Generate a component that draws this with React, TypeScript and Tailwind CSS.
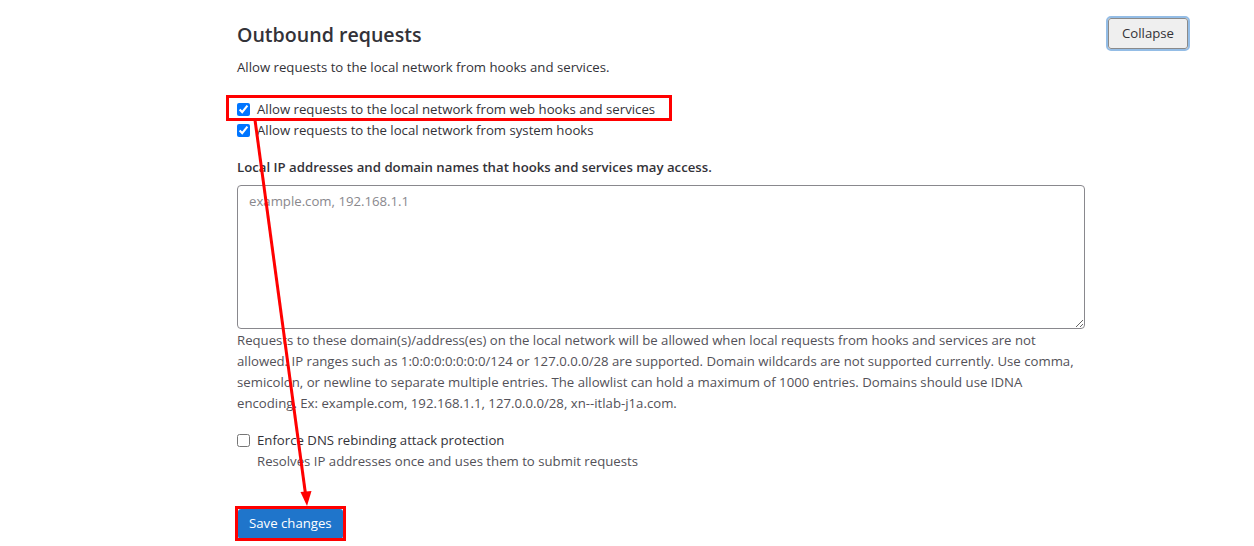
const helpLines = [
  "Requests to these domain(s)/address(es) on the local network will be allowed when local requests from hooks and services are not",
  "allowed. IP ranges such as 1:0:0:0:0:0:0:0/124 or 127.0.0.0/28 are supported. Domain wildcards are not supported currently. Use comma,",
  "semicolon, or newline to separate multiple entries. The allowlist can hold a maximum of 1000 entries. Domains should use IDNA",
  "encoding. Ex: example.com, 192.168.1.1, 127.0.0.0/28, xn--itlab-j1a.com.",
];

const App = () => {
  return (
    <div
      className="relative h-[546px] w-[1254px] overflow-hidden bg-white text-[13.2px] text-[#333238]"
      style={{ fontFamily: '"Open Sans", "Noto Sans", sans-serif' }}
    >
      <div className="flex justify-between pl-[237px] pr-[64px] pt-[19px]">
        <div className="w-[848px]">
          <h2 className="text-[19.6px] font-semibold leading-[32px] text-[#333238]">Outbound requests</h2>
          <p className="mt-[6px] leading-[21px]">Allow requests to the local network from hooks and services.</p>

          <div className="mt-[21px] flex flex-col">
            <label className="flex items-center gap-[7px] leading-[21px]">
              <input type="checkbox" defaultChecked className="m-0 h-[13px] w-[13px] accent-[#0075ff]" />
              <span>Allow requests to the local network from web hooks and services</span>
            </label>
            <label className="flex items-center gap-[7px] leading-[21px]">
              <input type="checkbox" defaultChecked className="m-0 h-[13px] w-[13px] accent-[#0075ff]" />
              <span>Allow requests to the local network from system hooks</span>
            </label>
          </div>

          <div className="mt-[16px] font-semibold leading-[21px]">
            Local IP addresses and domain names that hooks and services may access.
          </div>
          <textarea
            placeholder="example.com, 192.168.1.1"
            className="mt-[7px] block h-[144px] w-full rounded-[4px] border border-[#89888d] px-[11px] py-[5px] leading-[21px] placeholder:text-[#89888d] focus:outline-none"
          />
          <div className="mt-[1px] leading-[21px] text-[#535158]">
            {helpLines.map((line, i) => (
              <div key={i} className="whitespace-nowrap">{line}</div>
            ))}
          </div>

          <div className="mt-[16px]">
            <label className="flex items-center gap-[7px] leading-[21px]">
              <input type="checkbox" className="m-0 h-[13px] w-[13px]" />
              <span>Enforce DNS rebinding attack protection</span>
            </label>
            <div className="pl-[20px] leading-[21px] text-[#535158]">
              Resolves IP addresses once and uses them to submit requests
            </div>
          </div>

          <button className="mt-[37px] ml-[1px] h-[30px] rounded-[3px] bg-[#1f75cb] px-[11px] text-[13.2px] text-white">
            Save changes
          </button>
        </div>

        <div>
          <button className="-mt-[3px] h-[35px] rounded-[5px] border-[2px] border-[#94bde6] bg-transparent p-0">
            <span className="flex h-full items-center rounded-[3px] border border-[#8a8a8a] bg-[#efefef] px-[13px] text-[13.2px] text-[#333238]">
              Collapse
            </span>
          </button>
        </div>
      </div>

      {/* annotations */}
      <div className="pointer-events-none absolute left-[226px] top-[95px] h-[26px] w-[446px] border-[3px] border-[#ff0000]" />
      <div className="pointer-events-none absolute left-[235px] top-[506px] h-[35px] w-[111px] border-[3px] border-[#ff0000]" />
      <svg className="pointer-events-none absolute left-0 top-0" width="1254" height="546">
        <line x1="255" y1="120" x2="305.5" y2="494" stroke="#ff0000" strokeWidth="3" />
        <polygon points="307,506 300.5,492 311.5,491" fill="#ff0000" />
      </svg>
    </div>
  );
};

export default App;
